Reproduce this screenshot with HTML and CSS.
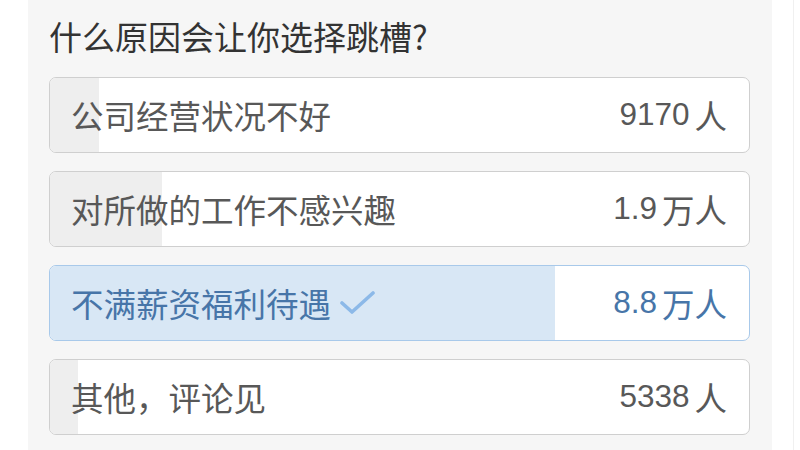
FILE: index.html
```html
<!DOCTYPE html>
<html lang="zh-CN">
<head>
<meta charset="utf-8">
<link rel="stylesheet" href="styles.css">
</head>
<body>
<div class="page">
  <div class="gutter"></div>
  <div class="panel">
    <h1 class="title">什么原因会让你选择跳槽?</h1>
    <div class="options">
      <div class="option">
        <div class="fill" style="width:7%"></div>
        <span class="label">公司经营状况不好</span>
        <span class="count">9170<span class="unit">人</span></span>
      </div>
      <div class="option">
        <div class="fill" style="width:16%"></div>
        <span class="label">对所做的工作不感兴趣</span>
        <span class="count">1.9<span class="unit">万人</span></span>
      </div>
      <div class="option selected">
        <div class="fill" style="width:72.2%"></div>
        <span class="label">不满薪资福利待遇<svg class="check" width="36" height="26" viewBox="0 0 36 26"><path d="M2 13 L12 22 L33 3" fill="none" stroke="#8cb9e8" stroke-width="3.6" stroke-linecap="round" stroke-linejoin="round"/></svg></span>
        <span class="count">8.8<span class="unit">万人</span></span>
      </div>
      <div class="option">
        <div class="fill" style="width:4%"></div>
        <span class="label">其他，评论见</span>
        <span class="count">5338<span class="unit">人</span></span>
      </div>
    </div>
  </div>
  <div class="side"></div>
</div>
</body>
</html>
```
FILE: styles.css
```css
html, body {
  margin: 0;
  padding: 0;
  background: #ffffff;
}
body {
  font-family: "Noto Sans CJK SC", "Noto Sans", sans-serif;
}
.page {
  display: flex;
  width: 800px;
  height: 450px;
  overflow: hidden;
}
.gutter {
  width: 28px;
  flex: none;
}
.panel {
  width: 744px;
  flex: none;
  background: #f6f6f6;
  box-sizing: border-box;
  padding: 16px 22px 0 21px;
}
.side {
  flex: 1;
  border-right: 1px solid #f0f0f0;
  margin-right: 6px;
}
.title {
  margin: 0 0 20px 0;
  font-size: 33px;
  line-height: 41px;
  font-weight: 400;
  color: #333333;
  padding-left: 0;
}
.options {
  display: flex;
  flex-direction: column;
  gap: 18px;
}
.option {
  position: relative;
  height: 76px;
  box-sizing: border-box;
  border: 1px solid #cfcfcf;
  border-radius: 7px;
  background: #ffffff;
  overflow: hidden;
  display: flex;
  align-items: center;
  justify-content: space-between;
  padding: 0 22px 2px 21px;
  color: #585858;
  font-size: 32.5px;
}
.fill {
  position: absolute;
  left: 0;
  top: 0;
  bottom: 0;
  background: #eeeeee;
}
.label, .count {
  position: relative;
  display: flex;
  align-items: center;
}
.count {
  font-family: "Liberation Sans", "Noto Sans CJK SC", sans-serif;
  font-size: 31.5px;
}
.unit {
  font-family: "Noto Sans CJK SC", sans-serif;
  font-size: 32.5px;
  margin-left: 5px;
}
.selected {
  border-color: #a8c9ea;
  color: #4775a8;
}
.selected .fill {
  background: #d8e7f5;
}
.check {
  margin-left: 9px;
  margin-top: 2px;
}
```
